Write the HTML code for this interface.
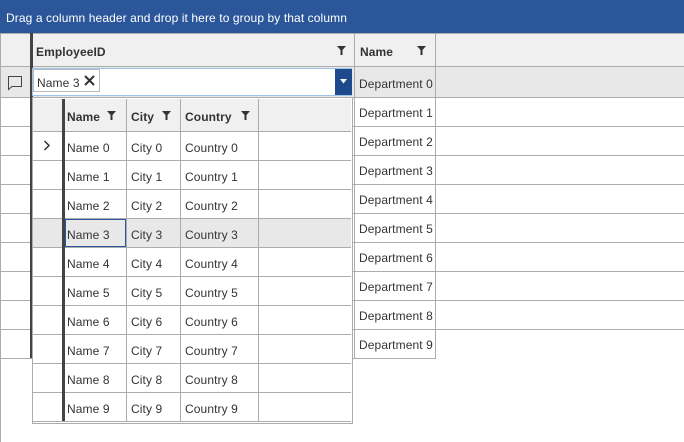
<!DOCTYPE html>
<html><head><meta charset="utf-8"><style>
*{margin:0;padding:0;box-sizing:border-box}
body{width:684px;height:442px;background:#fff;position:relative;overflow:hidden;font-family:"Liberation Sans",sans-serif;font-size:12px;color:#333}
.a{position:absolute}
.hl{position:absolute;height:1px;background:#acacac}
.vl{position:absolute;width:1px;background:#acacac}
.t{position:absolute;white-space:nowrap;line-height:14px;margin-top:1px;letter-spacing:0.1px}
.b{font-weight:bold}
.f{position:absolute;width:9px;height:9px}
</style></head><body>
<div class="a" style="left:0;top:0;width:684px;height:33px;background:#2b579a"></div>
<div class="t" style="left:6px;top:10px;color:#fff">Drag a column header and drop it here to group by that column</div>
<div class="a" style="left:0;top:33px;width:684px;height:34px;background:#f0f0f0"></div>
<div class="a" style="left:0;top:67px;width:684px;height:30px;background:#e8e8e8"></div>
<div class="hl" style="left:0;top:33px;width:684px"></div>
<div class="hl" style="left:0;top:66px;width:684px"></div>
<div class="hl" style="left:0;top:97px;width:684px"></div>
<div class="hl" style="left:0;top:126px;width:684px"></div>
<div class="hl" style="left:0;top:155px;width:684px"></div>
<div class="hl" style="left:0;top:184px;width:684px"></div>
<div class="hl" style="left:0;top:213px;width:684px"></div>
<div class="hl" style="left:0;top:242px;width:684px"></div>
<div class="hl" style="left:0;top:271px;width:684px"></div>
<div class="hl" style="left:0;top:300px;width:684px"></div>
<div class="hl" style="left:0;top:329px;width:684px"></div>
<div class="hl" style="left:0;top:358px;width:436px"></div>
<div class="vl" style="left:0;top:33px;height:409px"></div>
<div class="vl" style="left:354px;top:33px;height:325px"></div>
<div class="vl" style="left:435px;top:33px;height:325px"></div>
<div class="a" style="left:30px;top:33px;width:3px;height:325px;background:#444"></div>
<div class="t b" style="left:36px;top:44px">EmployeeID</div>
<svg class="f" style="left:337px;top:46px" viewBox="0 0 9 9"><path d="M0 0H9L5.5 4V9H3.5V4Z" fill="#333"/></svg>
<div class="t b" style="left:360px;top:44px">Name</div>
<svg class="f" style="left:417px;top:46px" viewBox="0 0 9 9"><path d="M0 0H9L5.5 4V9H3.5V4Z" fill="#333"/></svg>
<svg class="a" style="left:7px;top:75px" width="16" height="16" viewBox="0 0 16 16"><path d="M1.5 1.5H14.5V11.5H5L1.5 14.5Z" fill="none" stroke="#444" stroke-width="1"/></svg>
<div class="t" style="left:359px;top:76px">Department 0</div>
<div class="t" style="left:359px;top:105px">Department 1</div>
<div class="t" style="left:359px;top:134px">Department 2</div>
<div class="t" style="left:359px;top:163px">Department 3</div>
<div class="t" style="left:359px;top:192px">Department 4</div>
<div class="t" style="left:359px;top:221px">Department 5</div>
<div class="t" style="left:359px;top:250px">Department 6</div>
<div class="t" style="left:359px;top:279px">Department 7</div>
<div class="t" style="left:359px;top:308px">Department 8</div>
<div class="t" style="left:359px;top:337px">Department 9</div>
<div class="a" style="left:32px;top:68px;width:320px;height:28px;background:#fff;border:1px solid #9dc3ea"></div>
<div class="a" style="left:335px;top:69px;width:17px;height:26px;background:#1c4a8c"></div>
<svg class="a" style="left:340px;top:79px" width="7" height="5"><path d="M0 0H7L3.5 4.5Z" fill="#fff"/></svg>
<div class="a" style="left:33px;top:69px;width:67px;height:23px;border:1px solid #bbb;background:#fff"></div>
<div class="t" style="left:37px;top:75px">Name 3</div>
<svg class="a" style="left:84px;top:75px" width="11" height="11"><path d="M1 1L10 10M10 1L1 10" stroke="#333" stroke-width="2"/></svg>
<div class="a" style="left:32px;top:97px;width:321px;height:327px;background:#fff;border:1px solid #acacac"></div>
<div class="a" style="left:33px;top:99px;width:318px;height:32px;background:#f0f0f0"></div>
<div class="a" style="left:33px;top:218px;width:318px;height:29px;background:#e8e8e8"></div>
<div class="hl" style="left:33px;top:131px;width:318px"></div>
<div class="hl" style="left:33px;top:160px;width:318px"></div>
<div class="hl" style="left:33px;top:189px;width:318px"></div>
<div class="hl" style="left:33px;top:218px;width:318px"></div>
<div class="hl" style="left:33px;top:247px;width:318px"></div>
<div class="hl" style="left:33px;top:276px;width:318px"></div>
<div class="hl" style="left:33px;top:305px;width:318px"></div>
<div class="hl" style="left:33px;top:334px;width:318px"></div>
<div class="hl" style="left:33px;top:363px;width:318px"></div>
<div class="hl" style="left:33px;top:392px;width:318px"></div>
<div class="hl" style="left:33px;top:421px;width:318px"></div>
<div class="vl" style="left:126px;top:99px;height:322px"></div>
<div class="vl" style="left:180px;top:99px;height:322px"></div>
<div class="vl" style="left:258px;top:99px;height:322px"></div>
<div class="a" style="left:62px;top:99px;width:3px;height:322px;background:#444"></div>
<div class="a" style="left:65px;top:219px;width:61px;height:28px;border:1px solid #2b579a"></div>
<div class="t b" style="left:67px;top:109px">Name</div>
<svg class="f" style="left:107px;top:111px" viewBox="0 0 9 9"><path d="M0 0H9L5.5 4V9H3.5V4Z" fill="#333"/></svg>
<div class="t b" style="left:131px;top:109px">City</div>
<svg class="f" style="left:162px;top:111px" viewBox="0 0 9 9"><path d="M0 0H9L5.5 4V9H3.5V4Z" fill="#333"/></svg>
<div class="t b" style="left:185px;top:109px">Country</div>
<svg class="f" style="left:241px;top:111px" viewBox="0 0 9 9"><path d="M0 0H9L5.5 4V9H3.5V4Z" fill="#333"/></svg>
<svg class="a" style="left:43px;top:140px" width="8" height="11"><path d="M1.5 1L6 5.5L1.5 10" fill="none" stroke="#333" stroke-width="1.5"/></svg>
<div class="t" style="left:67px;top:140px">Name 0</div><div class="t" style="left:131px;top:140px">City 0</div><div class="t" style="left:185px;top:140px">Country 0</div>
<div class="t" style="left:67px;top:169px">Name 1</div><div class="t" style="left:131px;top:169px">City 1</div><div class="t" style="left:185px;top:169px">Country 1</div>
<div class="t" style="left:67px;top:198px">Name 2</div><div class="t" style="left:131px;top:198px">City 2</div><div class="t" style="left:185px;top:198px">Country 2</div>
<div class="t" style="left:67px;top:227px">Name 3</div><div class="t" style="left:131px;top:227px">City 3</div><div class="t" style="left:185px;top:227px">Country 3</div>
<div class="t" style="left:67px;top:256px">Name 4</div><div class="t" style="left:131px;top:256px">City 4</div><div class="t" style="left:185px;top:256px">Country 4</div>
<div class="t" style="left:67px;top:285px">Name 5</div><div class="t" style="left:131px;top:285px">City 5</div><div class="t" style="left:185px;top:285px">Country 5</div>
<div class="t" style="left:67px;top:314px">Name 6</div><div class="t" style="left:131px;top:314px">City 6</div><div class="t" style="left:185px;top:314px">Country 6</div>
<div class="t" style="left:67px;top:343px">Name 7</div><div class="t" style="left:131px;top:343px">City 7</div><div class="t" style="left:185px;top:343px">Country 7</div>
<div class="t" style="left:67px;top:372px">Name 8</div><div class="t" style="left:131px;top:372px">City 8</div><div class="t" style="left:185px;top:372px">Country 8</div>
<div class="t" style="left:67px;top:401px">Name 9</div><div class="t" style="left:131px;top:401px">City 9</div><div class="t" style="left:185px;top:401px">Country 9</div>
</body></html>
